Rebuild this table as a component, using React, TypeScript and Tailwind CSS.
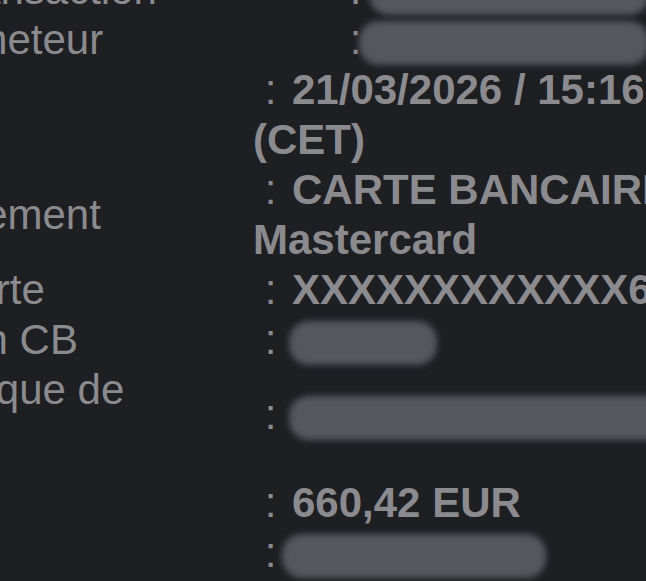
import { FC, ReactNode } from "react";

type Row = { label: string; value: ReactNode; extra?: string };

const Blur: FC<{ className: string }> = ({ className }) => (
  <span
    className={`inline-block h-[44px] align-middle rounded-[20px] bg-[#56575c] blur-[3px] ${className}`}
  />
);

const topRows: Row[] = [
  { label: "Numéro de transaction", value: <Blur className="w-[280px] -ml-[8px]" /> },
  { label: "Organisme émeteur", value: <Blur className="w-[290px] -ml-[18px]" /> },
];

const rows: Row[] = [
  { label: "Date / Heure", value: "21/03/2026 / 15:16:32 (CET)" },
  { label: "Moyen de paiement", value: "CARTE BANCAIRE Mastercard" },
  { label: "Numéro de carte", value: "XXXXXXXXXXXX6789" },
  { label: "N° autorisation CB", value: <Blur className="w-[148px] -ml-[3px]" /> },
  {
    label: "Identifiant banque de remise",
    value: <Blur className="w-[390px] -ml-[3px]" />,
    extra: "pb-[13px]",
  },
  { label: "Montant", value: "660,42 EUR" },
  { label: "Référence", value: <Blur className="w-[264px] -ml-[10px]" /> },
];

const Table: FC<{ data: Row[]; labelW: string }> = ({ data, labelW }) => (
  <table className="table-fixed w-[1120px]">
    <tbody>
      {data.map((r, i) => (
        <tr key={i}>
          <td className={`${labelW} align-middle ${r.extra ?? ""}`}>{r.label}</td>
          <td className={`w-[490px] align-middle ${r.extra ?? ""}`}>
            {"\u00a0: "}
            <span className="font-bold pl-1">{r.value}</span>
          </td>
          <td />
        </tr>
      ))}
    </tbody>
  </table>
);

export default function App() {
  return (
    <div className="w-screen h-screen overflow-hidden bg-[#1e1f23]">
      <div
        className="-ml-[268px] -mt-[35px] text-[42px] leading-[50px] text-[#8b8b8f]"
        style={{ fontFamily: '"Liberation Sans", Arial, sans-serif' }}
      >
        <Table data={topRows} labelW="w-[606px]" />
        <Table data={rows} labelW="w-[521px]" />
      </div>
    </div>
  );
}
